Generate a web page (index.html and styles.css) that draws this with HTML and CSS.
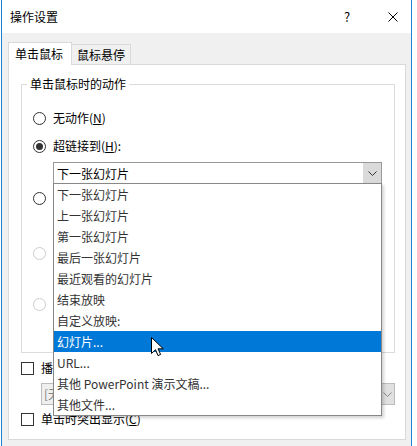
FILE: index.html
```html
<!DOCTYPE html>
<html lang="zh-CN">
<head>
    <meta charset="UTF-8">
    <meta name="viewport" content="width=device-width, initial-scale=1.0">
    <title>操作设置</title>
    <link rel="stylesheet" href="styles.css">
</head>
<body>

<div class="window">
    <div class="titlebar">
        <span class="title">操作设置</span>
        <span class="help">?</span>
        <svg class="close" width="10" height="10" viewBox="0 0 10 10">
            <path d="M0.5 0.5 L9.5 9.5 M9.5 0.5 L0.5 9.5" stroke="#000" stroke-width="1" fill="none"/>
        </svg>
    </div>

    <div class="client">
        <div class="tabs">
            <div class="tab active">单击鼠标</div>
            <div class="tab">鼠标悬停</div>
        </div>

        <div class="panel">
            <fieldset class="group">
                <legend>单击鼠标时的动作</legend>
                <div class="group-body">
                    <div class="option first"><span class="radio"></span>无动作(<u>N</u>)</div>
                    <div class="option second"><span class="radio checked"></span>超链接到(<u>H</u>):</div>

                    <div class="combo">
                        <span class="combo-text">下一张幻灯片</span>
                        <span class="combo-btn">
                            <svg width="9" height="5" viewBox="0 0 9 5">
                                <path d="M0.5 0.5 L4.5 4.5 L8.5 0.5" stroke="#333" stroke-width="1" fill="none"/>
                            </svg>
                        </span>
                        <ul class="dropdown">
                            <li>下一张幻灯片</li>
                            <li>上一张幻灯片</li>
                            <li>第一张幻灯片</li>
                            <li>最后一张幻灯片</li>
                            <li>最近观看的幻灯片</li>
                            <li>结束放映</li>
                            <li>自定义放映:</li>
                            <li class="selected">幻灯片...</li>
                            <li>URL...</li>
                            <li>其他 PowerPoint 演示文稿...</li>
                            <li>其他文件...</li>
                        </ul>
                    </div>

                    <!-- labels of these options are covered by the open list -->
                    <div class="option third" title="运行程序"><span class="radio"></span></div>
                    <div class="field"></div>
                    <div class="option fourth disabled" title="运行宏"><span class="radio"></span></div>
                    <div class="field"></div>
                    <div class="option fifth disabled" title="对象动作"><span class="radio"></span></div>
                    <div class="field"></div>
                </div>
            </fieldset>

            <div class="check-row"><span class="checkbox"></span>播放声音(<u>P</u>):</div>
            <div class="combo sound">
                <span class="combo-text">[无声音]</span>
                <span class="combo-btn">
                    <svg width="9" height="5" viewBox="0 0 9 5">
                        <path d="M0.5 0.5 L4.5 4.5 L8.5 0.5" stroke="#888" stroke-width="1" fill="none"/>
                    </svg>
                </span>
            </div>
            <div class="check-row last"><span class="checkbox"></span>单击时突出显示(<u>C</u>)</div>
        </div>
    </div>
</div>

<svg class="cursor" width="13" height="20" viewBox="0 0 13 20">
    <path d="M0.5 0.5 L0.5 16.5 L4.5 12.7 L7 18.6 L9.6 17.5 L7.1 11.8 L12.3 11.8 Z" fill="#fff" stroke="#000" stroke-width="1" stroke-linejoin="miter"/>
</svg>

</body>
</html>
```

FILE: styles.css
```css
body {
    margin: 0;
    background: #fff;
    font-family: "Noto Sans CJK SC", sans-serif;
    font-size: 12px;
    line-height: 16px;
    color: #000;
}
.window {
    width: 411px;
    height: 446px;
    margin-left: 1px;
    box-sizing: border-box;
    border-left: 1px solid #1883d7;
    border-right: 1px solid #1883d7;
    display: flex;
    flex-direction: column;
}
.titlebar {
    height: 33px;
    display: flex;
    align-items: center;
    background: #fff;
    padding-left: 8px;
}
.title {
    flex: 1;
}
.help {
    width: 12px;
    text-align: center;
    font-size: 13px;
}
.close {
    margin-left: 35px;
    margin-right: 13px;
}
.client {
    flex: 1;
    background: #f0f0f0;
    padding: 9px 5px 0 6px;
}
.tabs {
    display: flex;
    align-items: flex-end;
}
.tab {
    height: 19px;
    line-height: 19px;
    padding: 0 5px;
    border: 1px solid #d9d9d9;
    border-bottom: none;
    border-left: none;
    background: #f0f0f0;
}
.tab.active {
    height: 22px;
    line-height: 21px;
    padding: 0 8px 0 6px;
    margin-bottom: -1px;
    border-left: 1px solid #d9d9d9;
    background: #fff;
    position: relative;
    z-index: 1;
}
.panel {
    border: 1px solid #d9d9d9;
    background: #fff;
    padding: 0 9px 12px 12px;
}
.group {
    margin: 11px 1px 0 0;
    padding: 0 0 10px 0;
    border: 1px solid #dcdcdc;
    min-width: 0;
}
.group legend {
    margin-left: 5px;
    padding: 0 3px;
    line-height: 16px;
}
.group-body {
    padding-left: 11px;
}
.option {
    display: flex;
    align-items: center;
    height: 16px;
}
.option.first { margin-top: 18px; }
.option.second { margin-top: 12px; }
.option.third { margin-top: 5px; }
.option.fourth { margin-top: 9px; }
.option.fifth { margin-top: 5px; }
.option.disabled {
    color: #a0a0a0;
}
.radio {
    width: 13px;
    height: 13px;
    box-sizing: border-box;
    border: 1px solid #333;
    border-radius: 50%;
    background: #fff;
    margin-right: 7px;
    display: flex;
    align-items: center;
    justify-content: center;
}
.option.disabled .radio {
    border-color: #cccccc;
}
.radio.checked::after {
    content: "";
    width: 7px;
    height: 7px;
    border-radius: 50%;
    background: #333;
}
.combo {
    position: relative;
    width: 329px;
    height: 23px;
    margin: 8px 0 0 20px;
    box-sizing: border-box;
    border: 1px solid #999;
    background: #fff;
    display: flex;
    align-items: center;
}
.combo-text {
    flex: 1;
    padding-left: 3px;
}
.combo-btn {
    width: 18px;
    height: 100%;
    background: #dadada;
    display: flex;
    align-items: center;
    justify-content: center;
}
.dropdown {
    position: absolute;
    left: -1px;
    top: calc(100% - 1px);
    width: 329px;
    margin: 0;
    padding: 0;
    list-style: none;
    box-sizing: border-box;
    border: 1px solid #888;
    background: #fff;
    box-shadow: 2px 2px 3px rgba(0, 0, 0, 0.18);
    z-index: 5;
}
.dropdown li {
    height: 21px;
    line-height: 21px;
    padding-left: 3px;
    color: #333;
}
.dropdown li.selected {
    background: #0078d7;
    color: #fff;
}
.field {
    width: 329px;
    height: 22px;
    margin: 8px 0 0 20px;
    box-sizing: border-box;
    border: 1px solid #ccc;
    background: #f0f0f0;
}
.check-row {
    display: flex;
    align-items: center;
    height: 16px;
    margin-top: 7px;
}
.check-row.last {
    margin-top: 6px;
}
.checkbox {
    width: 13px;
    height: 13px;
    box-sizing: border-box;
    border: 1px solid #333;
    background: #fff;
    margin-right: 7px;
}
.combo.sound {
    width: 354px;
    height: 22px;
    margin: 7px 0 0 20px;
    border-color: #bcbcbc;
    background: #efefef;
    color: #838383;
}
.combo.sound .combo-text {
    padding-left: 2px;
}
.combo.sound .combo-btn {
    width: 14px;
    background: #e0e0e0;
    border-left: 1px solid #adadad;
}
.cursor {
    position: absolute;
    left: 151px;
    top: 337px;
    z-index: 10;
}
```
